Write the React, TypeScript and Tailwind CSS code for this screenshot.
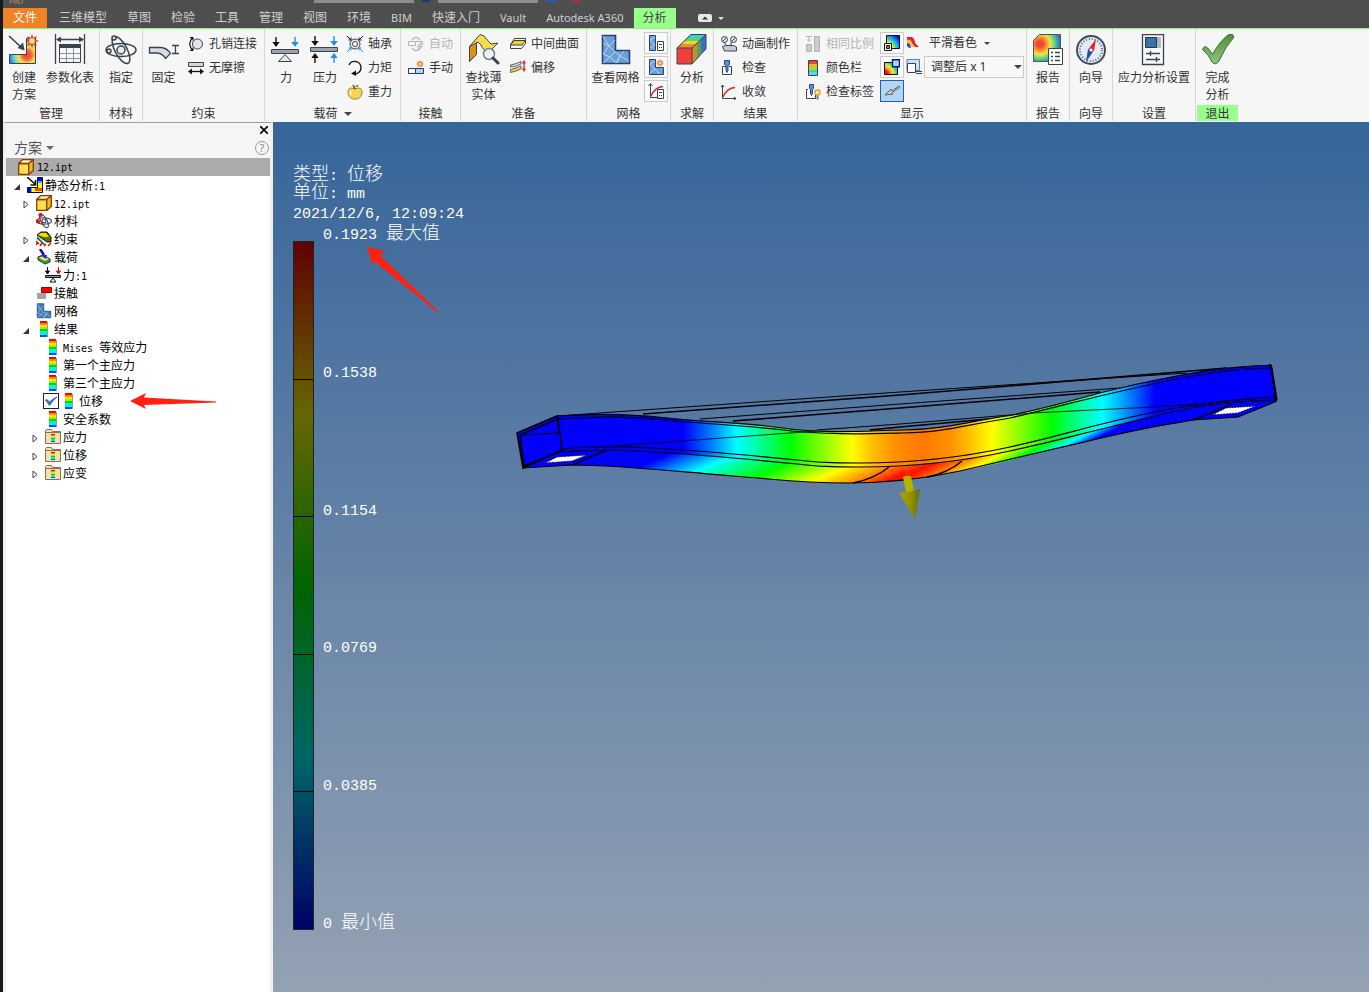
import type { ReactNode } from 'react'

const INK = '#3a4250'

type IconProps = { size?: number; children: ReactNode }

function Svg({ size = 16, children }: IconProps) {
  return (
    <svg width={size} height={size} viewBox={`0 0 ${size} ${size}`} fill="none" className="block shrink-0">
      {children}
    </svg>
  )
}

function Burst({ x, y, r = 6 }: { x: number; y: number; r?: number }) {
  const pts = Array.from({ length: 16 }, (_, i) => {
    const a = (i * Math.PI) / 8
    const d = i % 2 ? r * 0.5 : r
    return `${x + d * Math.cos(a)},${y + d * Math.sin(a)}`
  }).join(' ')
  return (
    <>
      <polygon points={pts} fill="#e0301c" />
      <circle cx={x} cy={y} r={r * 0.42} fill="#ffe9a0" stroke="#f6a623" />
    </>
  )
}

/* ---------- 大图标 32px ---------- */

const StudyIcon = () => (
  <Svg size={32}>
    <defs>
      <radialGradient id="study" gradientUnits="userSpaceOnUse" cx="19" cy="21" r="19">
        <stop offset="0" stopColor="#f0383c" />
        <stop offset=".25" stopColor="#f46a3c" />
        <stop offset=".45" stopColor="#fbe04a" />
        <stop offset=".7" stopColor="#5fd8d0" />
        <stop offset="1" stopColor="#2f62d8" />
      </radialGradient>
    </defs>
    <path d="M1.5 20.5h17v-16h9v25h-26z" fill="url(#study)" stroke={INK} />
    <path d="M1 2l13 12" stroke={INK} strokeWidth="1.6" />
    <path d="M16.5 16.5l-7-2.5 5.5-5.5z" fill={INK} />
    <Burst x={24} y={7} r={7} />
  </Svg>
)

const TableIcon = () => (
  <Svg size={32}>
    <path d="M1.5 0v30M30.5 0v30M3 5.5h26" stroke={INK} strokeWidth="1.3" />
    <path d="M2 5.5l5-3v6zM30 5.5l-5-3v6z" fill={INK} />
    <path d="M5.5 10.5h21v18h-21z" fill="#f4f6f8" stroke={INK} />
    <path d="M5 10h22v4H5z" fill={INK} />
    <path d="M6 19.5h20M6 24.5h20M12.5 14v14M19.5 14v14" stroke="#8d95a0" />
  </Svg>
)

const AtomIcon = ({ size = 32, dot = false }: { size?: number; dot?: boolean }) => (
  <svg width={size} height={size} viewBox="0 0 32 32" fill="none" className="block shrink-0">
    <g stroke={INK} strokeWidth={dot ? 2.2 : 1.5}>
      <ellipse cx="16" cy="16" rx="15" ry="6.5" />
      <ellipse cx="16" cy="16" rx="15" ry="6" transform="rotate(62 16 16)" />
      <circle cx="16" cy="16" r="4" fill="#e8ebef" />
      <circle cx="9" cy="4" r={dot ? 3 : 2} fill={dot ? '#f00' : '#dfe3e8'} stroke={dot ? '#f00' : INK} />
      <circle cx="4" cy="17" r={dot ? 3 : 2} fill={dot ? '#f00' : '#dfe3e8'} stroke={dot ? '#f00' : INK} />
    </g>
  </svg>
)

const FixedIcon = () => (
  <Svg size={32}>
    <path d="M1.5 13.5h12q6 1 9 6l-5 5q-3-5-8-5.5h-8z" fill="#d8dde3" stroke={INK} strokeWidth="1.3" />
    <path d="M24 11.5h7M24 19.5h7M27.5 11.5v8" stroke={INK} strokeWidth="1.3" />
  </Svg>
)

const DownArrow = ({ x, y, fill }: { x: number; y: number; fill: string }) => (
  <path d={`M${x - 0.7} ${y}h1.4v5h3l-3.7 5-3.7-5h3z`} fill={fill} />
)

const ForceIcon = () => (
  <Svg size={32}>
    <DownArrow x={6} y={3} fill="#111" />
    <DownArrow x={25} y={3} fill="#1f8fe8" />
    <path d="M1.5 15.5h27v4h-27z" fill="#99a1ad" stroke={INK} />
    <path d="M15 20.5l6.5 7h-13z" fill="#e3e6ea" stroke={INK} />
  </Svg>
)

const PressureIcon = () => (
  <Svg size={32}>
    <DownArrow x={6} y={2} fill="#111" />
    <DownArrow x={25} y={2} fill="#1f8fe8" />
    <path d="M1.5 13.5h27v4h-27z" fill="#99a1ad" stroke={INK} />
    <g transform="rotate(180 16 16)">
      <DownArrow x={26} y={3} fill="#111" />
      <DownArrow x={7} y={3} fill="#1f8fe8" />
    </g>
  </Svg>
)

const ThinIcon = () => (
  <Svg size={32}>
    <path d="M1.5 12.5l7-7v15l-7 7z" fill="#d9960a" stroke={INK} />
    <path d="M1.5 12.5L12 .5l4 1.500q4 5 7 8l7-1-9 9q-6-1-8-7l-3-3z" fill="#f7dd4c" stroke={INK} />
    <circle cx="21" cy="20" r="5.5" fill="#eef4f8" fillOpacity=".9" stroke="#77808c" strokeWidth="1.5" />
    <path d="M25 24l5 5" stroke={INK} strokeWidth="3" strokeLinecap="round" />
  </Svg>
)

const MeshIcon = ({ size = 32, fill = '#6b9edc' }: { size?: number; fill?: string }) => (
  <svg width={size} height={size} viewBox="0 0 32 32" fill="none" className="block shrink-0">
    <path d="M2.5 1.5h13v15h14v13h-27z" fill={fill} stroke="#24446f" strokeWidth="1.6" />
    <path d="M3 9l6 3 6-6M9 12l-6 8 7 3-7 6M9 12l6 6-5 5 6 6 4-7-5-4M20 22l9 5M20 22l4-5M20 22l-3 7M3 2l6 10" stroke="#b8d3f2" />
  </svg>
)

const SolveIcon = () => (
  <Svg size={32}>
    <path d="M1 14L15 0h15L16 14z" fill="#f3d23c" />
    <path d="M10 5l5-5h15l-5 5z" fill="#2fd4d8" />
    <path d="M8 7l3-3h15l-3 3z" fill="#5cd85c" />
    <path d="M1 14l4-4h15l-4 4z" fill="#f08b2c" />
    <path d="M16 14l5-5v16l-5 5z" fill="#c8902c" />
    <path d="M21 9l4-4v15l-4 5z" fill="#58a04c" />
    <path d="M25 5l5-5v15l-5 5z" fill="#3c6fc8" />
    <path d="M1 14h15v16H1z" fill="#f0403c" />
    <path d="M1 14L15 .5h15V15L16 30H1zM1 14h15v16M16 14L30 .5" stroke={INK} />
  </Svg>
)

const ReportIcon = () => (
  <Svg size={32}>
    <defs>
      <radialGradient id="report" gradientUnits="userSpaceOnUse" cx="8" cy="10" r="22">
        <stop offset=".14" stopColor="#f0453c" />
        <stop offset=".3" stopColor="#f5922f" />
        <stop offset=".48" stopColor="#f3e445" />
        <stop offset=".68" stopColor="#4fd48c" />
        <stop offset="1" stopColor="#2f50d8" />
      </radialGradient>
    </defs>
    <path d="M1.5 6.5l6-6h21v27h-27z" fill="url(#report)" stroke="#4b5a50" />
    <path d="M16.5 14.5h14v16h-14z" fill="#fff" stroke={INK} />
    <path d="M19 18.5h2M23 18.5h5M19 22.5h2M23 22.5h5M19 26.5h2M23 26.5h5" stroke={INK} strokeWidth="1.3" />
  </Svg>
)

const CompassIcon = () => (
  <Svg size={32}>
    <circle cx="16" cy="16" r="14" fill="#e3ebf3" stroke="#414b5a" strokeWidth="2" />
    <circle cx="16" cy="16" r="11" stroke="#5a6472" strokeWidth="2" strokeDasharray="1 1.9" />
    <path d="M21 5l-2 12-5.500-2z" fill="#e8202c" />
    <path d="M11 28l2-13 5.500 2z" fill="#1f4fae" />
    <circle cx="16" cy="16" r="1.5" fill="#fff" />
  </Svg>
)

const SettingsIcon = () => (
  <Svg size={32}>
    <path d="M4.5.5h21v30h-21z" fill="#f7f8f9" stroke={INK} strokeWidth="1.3" />
    <path d="M7.5 3.5h11v10h-11z" fill="#3f70a4" stroke="#1f3656" />
    <path d="M19 3h4v11h-4z" fill="#b4b8bf" />
    <path d="M8 19.5h14M8 25.5h14M12.5 17v5M18.5 23v5" stroke={INK} strokeWidth="1.3" />
  </Svg>
)

const CheckIcon = () => (
  <Svg size={32}>
    <defs>
      <linearGradient id="tick" x1="0" y1="0" x2="0" y2="1">
        <stop offset="0" stopColor="#4f8c3c" />
        <stop offset="1" stopColor="#8cc878" />
      </linearGradient>
    </defs>
    <path d="M.7 15q2-4 5-1l5 6Q18 7 26 1q5-2 6 2-9 10-15 24-4 5-7 1-3-7-9-12z" fill="url(#tick)" stroke="#3a6b2c" />
  </Svg>
)

/* ---------- 小图标 16px ---------- */

const PinIcon = () => (
  <Svg>
    <circle cx="9.500" cy="8" r="5" fill="#e1e6ec" stroke={INK} />
    <path d="M4.5 1.5Q-1 8 4.5 14.5M5 1.5H2M5 1.5v3M5 14.5H2M5 14.5v-3" stroke="#111" strokeWidth="1.2" />
  </Svg>
)
const FrictionIcon = () => (
  <Svg>
    <path d="M.5 2.5h15v4H.5z" fill="#d3d8de" stroke={INK} />
    <path d="M2 11.5h12" stroke="#111" strokeWidth="1.3" />
    <path d="M0 11.5l4-3v6zM16 11.5l-4-3v6z" fill="#111" />
  </Svg>
)
const BearingIcon = () => (
  <Svg>
    <circle cx="8" cy="8" r="5" fill="#e6e9ed" stroke={INK} />
    <circle cx="8" cy="8" r="2.5" fill="#fff" stroke={INK} />
    <path d="M0 0l4 4M16 0l-4 4M1.5 4h2.500v-2.500M14.5 4H12V1.5" stroke="#111" />
    <path d="M0 16l4-4M16 16l-4-4M1.5 12h2.500v2.500M14.5 12H12v2.500" stroke="#1f8fe8" />
  </Svg>
)
const MomentIcon = () => (
  <Svg>
    <path d="M2 5a6.300 6.300 0 1 1 6 9" stroke="#111" strokeWidth="1.4" />
    <path d="M4 13.5l5-3v5.500z" fill="#111" />
  </Svg>
)
const AppleIcon = () => (
  <Svg>
    <path d="M8 5q7-3 7 3 0 5-4.500 7h-5Q1 13 1 8q0-6 7-3z" fill="#f3d554" stroke="#a8842a" />
    <path d="M4 7q-1.500 2 0 4" stroke="#fff6c4" strokeWidth="1.5" />
    <path d="M8 5L6 1" stroke="#5a4a20" strokeWidth="1.5" />
    <path d="M8 3q1-3 4-2-1 3-4 2z" fill="#8a9a3a" />
  </Svg>
)
const AutoIcon = () => (
  <Svg>
    <path d="M4 4Q8-1 12 4M4 12q4 5 8 0" stroke="#bbb" strokeWidth="1.5" />
    <path d="M.5 5.5h7v4h-7zM7.5 5.5h7v3" stroke="#b4b4b4" />
    <path d="M12 7l-3 4h3l-2 4 5-5h-3l2-3z" fill="#d4d4d4" stroke="#b4b4b4" strokeWidth=".7" />
  </Svg>
)
const ManualIcon = () => (
  <Svg>
    <path d="M.5 8.5h7v5h-7z" fill="#fff" stroke="#1c3f78" />
    <path d="M7.5 8.5h8v5h-8z" fill="#b5d0f0" stroke="#1c3f78" />
    <Burst x={12} y={4} r={4} />
  </Svg>
)
const MidIcon = () => (
  <Svg>
    <path d="M.5 8.5l4-6h11v5l-4 5H.5z" fill="#f5f5ee" stroke={INK} />
    <path d="M.5 9l3.500-4.500h11.500L12 9z" fill="#f6cf2c" stroke={INK} />
  </Svg>
)
const OffsetIcon = () => (
  <Svg>
    <path d="M.5 5Q6 4 11 1.5v2.500Q6 7 .5 7z" fill="#d3dae2" stroke={INK} strokeWidth=".8" />
    <path d="M.5 9.5q5.500-1 10.500-3.500v3Q6 11.5.5 12.5z" fill="#f6cf2c" stroke={INK} strokeWidth=".8" />
    <path d="M14 2v8" stroke="#e02020" strokeWidth="1.2" />
    <path d="M14 0l2 3.500h-4zM14 12l2-3.500h-4z" fill="#e02020" />
  </Svg>
)
const Calc = () => (
  <>
    <path d="M9.5 6.5h6v9h-6z" fill="#fff" stroke={INK} />
    <path d="M11 9.5h3M11 12.5h1M13 12.5h1" stroke={INK} />
  </>
)
const MeshCalcIcon = () => (
  <Svg>
    <path d="M1.5.5h6v15h-6z" fill="#6b9edc" stroke="#24446f" />
    <path d="M2 5l5-3M2 5l5 5M2 13l5-3" stroke="#b8d3f2" />
    <Calc />
  </Svg>
)
const MeshNewIcon = () => (
  <Svg>
    <path d="M1.5.5h6v8h8v7h-14z" fill="#6b9edc" stroke="#24446f" />
    <path d="M2 5l5-3M2 5l5 5-5 4M7 10l5 5" stroke="#b8d3f2" />
    <Burst x={12} y={4} r={4} />
  </Svg>
)
const CurveCalcIcon = () => (
  <Svg>
    <path d="M2.5 1v13.500H16M.5 3l2-2.500 2 2.500" stroke={INK} />
    <path d="M3 13Q7 4 15 3.5" stroke="#e02020" strokeWidth="1.3" />
    <Calc />
  </Svg>
)
const MovieIcon = () => (
  <Svg>
    <circle cx="3.500" cy="3.500" r="3" fill="#e1e5ea" stroke={INK} />
    <circle cx="12.500" cy="3.500" r="3" fill="#e1e5ea" stroke={INK} />
    <path d="M2 5l3-3M11 5l3-3M3 6l3 4M10 6v4" stroke={INK} />
    <path d="M1.5 10.5l3-1h8l3 1.500v4h-12z" fill="#c3c9d1" stroke={INK} />
  </Svg>
)
const ProbeIcon = () => (
  <Svg>
    <path d="M5 6.5H1.5v8h9v-8H8" fill="#fff" stroke={INK} />
    <path d="M3.5.5h5v4l-1.500 1v5l-1 2-1-2v-5l-1.500-1z" fill="#5b94d8" stroke="#1d4a88" />
  </Svg>
)
const ConvergeIcon = () => (
  <Svg>
    <path d="M1.5 1v13.500H15M0 3l1.500-2L3 3M13 13l2 1.500-2 1.500" stroke={INK} />
    <path d="M2 13Q6 4 14 3.5" stroke="#e02020" strokeWidth="1.4" />
  </Svg>
)
const ScaleIcon = () => (
  <Svg>
    <path d="M1 .5h6M4 1v4M2 3.5l2 2 2-2" stroke="#b0b0b0" />
    <path d="M1.500 8.500h5v7h-5zM9.500.500h5v15h-5z" fill="#ccc" stroke="#b0b0b0" />
  </Svg>
)
const ColorBarIcon = () => (
  <Svg>
    <path d="M4 1h8v3H4z" fill="#e84a30" />
    <path d="M4 4h8v3H4z" fill="#f0b030" />
    <path d="M4 7h8v3H4z" fill="#a8d840" />
    <path d="M4 10h8v2H4z" fill="#40d0a0" />
    <path d="M4 12h8v3H4z" fill="#60d8f0" />
    <path d="M3.5.5h9v15h-9z" stroke={INK} />
  </Svg>
)
const ProbeTagIcon = () => (
  <Svg>
    <path d="M3 5.5H1.5v9h9v-5" fill="#fff" stroke={INK} />
    <path d="M4.5.5h4v4l-1 1v4l-1 2-1-2v-4l-1-1z" fill="#5b94d8" stroke="#1d4a88" />
    <circle cx="12.500" cy="8.500" r="2.600" fill="#ffe79a" stroke="#e8982a" strokeWidth="1.300" />
    <path d="M11.5 11.500h2v4h-2z" fill="#777" />
  </Svg>
)
const ExtremeIcon = ({ high }: { high?: boolean }) => (
  <Svg>
    <defs>
      <radialGradient id={high ? 'exHigh' : 'exLow'} gradientUnits="userSpaceOnUse" cx={1} cy={15} r={19}>
        <stop offset=".15" stopColor="#f01818" />
        <stop offset=".35" stopColor="#fb3" />
        <stop offset=".45" stopColor="#f6f020" />
        <stop offset=".6" stopColor="#20d8c0" />
        <stop offset=".75" stopColor="#28f" />
        <stop offset="1" stopColor="#00c" />
      </radialGradient>
    </defs>
    <path d={high ? 'M.5 3.5h13v12H.5z' : 'M2.5.5h13v13h-13z'} fill={high ? 'url(#exHigh)' : 'url(#exLow)'} stroke="#111" />
    {high ? (
      <path d="M8.500.700h7v7h-7z" fill="#b8d0ff" stroke="#001a80" strokeWidth="1.4" />
    ) : (
      <>
        <path d="M.5 8.5h7v7h-7z" fill="#fff" stroke="#111" />
        <path d="M2.5 10.5h3v3h-3z" fill="#f55" stroke="#111" />
      </>
    )}
  </Svg>
)
const LoadArrowIcon = () => (
  <Svg>
    <path d="M15 3l-7 5-1-2-6 6 8-1-1-1.500 7.500-5z" fill="#c5c9ce" stroke="#5a6370" />
  </Svg>
)
const SmoothIcon = () => (
  <Svg>
    <path d="M1 2h5q3 2 3 6l4 4h-4Q6 9 5 6 4 4 1 5z" fill="#f02020" />
    <path d="M1 5q3-1 4 2 1 4 4 5H6Q3 9 1 8z" fill="#fb2" />
    <path d="M1 8q3 0 4 5-3 0-4-2z" fill="#24c" />
  </Svg>
)
const AdjustIcon = () => (
  <Svg>
    <path d="M1 .5h12.500v11H1z" fill="#cfe2f2" stroke="#4a86b4" />
    <path d="M1.5 4.500h8v9h-8z" fill="#fff" stroke={INK} />
    <path d="M10 12h6v4h-6z" fill="#f6f6f6" />
    <path d="M10 12.5h6M10 14.5h6" stroke={INK} />
  </Svg>
)

/* ---------- 浏览器树图标 ---------- */

const CubeIcon = () => (
  <Svg>
    <path d="M.7 4.5h10v11H.7z" fill="#ffdf50" stroke="#8a3c00" strokeWidth="1.3" />
    <path d="M.7 4.5l4-4h10.600l-4.600 4z" fill="#fff3b8" stroke="#8a3c00" strokeWidth="1.3" />
    <path d="M10.700 4.500l4.600-4v11l-4.600 4z" fill="#f0b820" stroke="#8a3c00" strokeWidth="1.3" />
  </Svg>
)
const TreeStudyIcon = () => (
  <Svg>
    <path d="M.5 10.5h10v-10h5v15H.5z" fill="#00d8f0" stroke="#111" />
    <path d="M1 11h3v4H1zM11 1h4v3h-4z" fill="#00f" />
    <path d="M5 11h10v4H5zM11 6h4v5h-4z" fill="#ff0" />
    <path d="M8 11h7v3H8z" fill="#f40" />
    <path d="M0 0l8 7M8.5 3v5h-5" stroke="#111" strokeWidth="1.6" />
  </Svg>
)
const TreeConstraintIcon = () => (
  <Svg>
    <path d="M1 4l4-3h6l4 5v5h-4z" fill="#6a6a10" stroke="#111" />
    <path d="M2 4l3-2h5l3 4H8z" fill="#f0e000" />
    <path d="M1 5l8 8v2L1 8z" fill="#084" />
    <path d="M0 10l3 3M4 15l2-3M8 15l2-2M12 15l3-3M0 14l2-3" stroke="#d00" strokeWidth="1.4" />
  </Svg>
)
const TreeLoadIcon = () => (
  <Svg>
    <path d="M2 8l5-2 7 4v3l-5 2-7-4z" fill="#2a9a50" stroke="#333" />
    <path d="M3 9l4-2 6 3-4 2z" fill="#f4f020" />
    <path d="M4 0l4 6" stroke="#10c" strokeWidth="2.5" />
    <path d="M4 6h7l-1 4z" fill="#22f" />
  </Svg>
)
const TreeForceIcon = () => (
  <Svg>
    <path d="M2.5 0v6M.5 4l2 3 2-3z" stroke="#111" fill="#111" />
    <path d="M13.5 0v6M11.5 4l2 3 2-3z" stroke="#f00" fill="#f00" />
    <path d="M.5 8.5h15v2H.5z" fill="#7a9ab0" stroke="#111" />
    <path d="M8 11l3 4H5z" fill="#fff" stroke="#111" />
  </Svg>
)
const ContactIcon = () => (
  <Svg>
    <path d="M1 8h9v6H1z" fill="#a4a4a4" />
    <path d="M5.5 2.5h10v5h-10z" fill="#f00" stroke="#900" />
  </Svg>
)
const Stripes = ({ x = 4, y = 0, w = 7, h = 2 }) => (
  <>
    {['#ff0000', '#ff9000', '#ffe800', '#a0f000', '#00d800', '#00ffb0', '#00f0ff', '#0050ff'].map((c, i) => (
      <rect key={c} x={x} y={y + i * h} width={w} height={h} fill={c} />
    ))}
  </>
)
const ResultIcon = () => (
  <Svg>
    <path d="M11 1h1v15h-1z" fill="#999" />
    <Stripes />
  </Svg>
)
const FolderIcon = () => (
  <Svg>
    <path d="M.5 1.5l1-1h5l1 2h8v12H.5z" fill="#f6dfae" stroke="#8c6f4c" />
    <path d="M1 3.5h14" stroke="#8c6f4c" />
    <Stripes x={6} y={5} w={4} h={1} />
  </Svg>
)

/* ---------- 功能区 ---------- */

// 西文单独设字体字号，中文保持全角
function Mixed({ text, latin }: { text: string; latin: string }) {
  return (
    <span className="whitespace-pre">
      {text.split(/([\x20-\x7e]+)/).map((part, i) =>
        i % 2 ? (
          <span key={i} className={latin}>
            {part}
          </span>
        ) : (
          part
        )
      )}
    </span>
  )
}

function Panel({ title, children, more, exit }: { title: string; children: ReactNode; more?: boolean; exit?: boolean }) {
  return (
    <section className="flex flex-col border-r border-[#d6d6d6] last:border-r-0">
      <div className="flex h-[76px]">{children}</div>
      <h2 className={`mx-px flex h-4 items-center justify-center gap-1.5 pt-0.5 ${exit ? 'bg-[#98ff8c]' : ''}`}>
        {title}
        {more && <i className="border-x-4 border-t-4 border-x-transparent border-t-[#444]" />}
      </h2>
    </section>
  )
}

function Big({ icon, lines, width = 'w-full' }: { icon: ReactNode; lines: string[]; width?: string }) {
  return (
    <button className={`flex flex-col items-center pt-[5px] ${width}`}>
      {icon}
      <span className="mt-[3px] flex flex-col leading-[17px] whitespace-nowrap">
        {lines.map((l) => (
          <span key={l}>{l}</span>
        ))}
      </span>
    </button>
  )
}

function SmallList({ items, first }: { items: [ReactNode, string, boolean?][]; first?: boolean }) {
  return (
    <div className={`flex flex-col pt-[3px] ${first ? 'pl-[7px]' : 'pl-1'}`}>
      {items.map(([icon, label, off]) => (
        <button
          key={label}
          disabled={off}
          className="flex h-6 items-center gap-[5px] whitespace-nowrap disabled:text-[#b4b4b4]"
        >
          {icon}
          {label}
        </button>
      ))}
    </div>
  )
}

function IconButtons({ items }: { items: [ReactNode, string, boolean?][] }) {
  return (
    <div className="flex flex-col gap-0.5 pt-[3px]">
      {items.map(([icon, label, on]) => (
        <button
          key={label}
          aria-label={label}
          className={`flex h-[22px] w-6 items-center justify-center border ${
            on ? 'border-[#1c62b8] bg-[#b4d4f2]' : 'border-[#cacaca] bg-[#fafafa]'
          }`}
        >
          {icon}
        </button>
      ))}
    </div>
  )
}

function Ribbon() {
  return (
    <div className="grid grid-cols-[97px_43px_122px_136px_60px_126px_84px_43px_84px_229px_43px_43px_83px_43px] border-t border-[#8cf57c] bg-[#f6f6f6] pb-px text-xs text-[#333]">
      <Panel title="管理">
        <Big icon={<StudyIcon />} lines={['创建', '方案']} width="w-[42px]" />
        <Big icon={<TableIcon />} lines={['参数化表']} width="w-[50px]" />
      </Panel>
      <Panel title="材料">
        <Big icon={<AtomIcon />} lines={['指定']} />
      </Panel>
      <Panel title="约束">
        <Big icon={<FixedIcon />} lines={['固定']} width="w-[41px]" />
        <SmallList items={[[<PinIcon />, '孔销连接'], [<FrictionIcon />, '无摩擦']]} />
      </Panel>
      <Panel title="载荷" more>
        <Big icon={<ForceIcon />} lines={['力']} width="w-[42px]" />
        <Big icon={<PressureIcon />} lines={['压力']} width="w-[36px]" />
        <SmallList items={[[<BearingIcon />, '轴承'], [<MomentIcon />, '力矩'], [<AppleIcon />, '重力']]} />
      </Panel>
      <Panel title="接触">
        <SmallList first items={[[<AutoIcon />, '自动', true], [<ManualIcon />, '手动']]} />
      </Panel>
      <Panel title="准备">
        <Big icon={<ThinIcon />} lines={['查找薄', '实体']} width="w-[45px]" />
        <SmallList items={[[<MidIcon />, '中间曲面'], [<OffsetIcon />, '偏移']]} />
      </Panel>
      <Panel title="网格">
        <Big icon={<MeshIcon />} lines={['查看网格']} width="w-[57px]" />
        <IconButtons
          items={[
            [<MeshCalcIcon />, '网格设置'],
            [<MeshNewIcon />, '局部网格控制'],
            [<CurveCalcIcon />, '收敛设置'],
          ]}
        />
      </Panel>
      <Panel title="求解">
        <Big icon={<SolveIcon />} lines={['分析']} />
      </Panel>
      <Panel title="结果">
        <SmallList first items={[[<MovieIcon />, '动画制作'], [<ProbeIcon />, '检查'], [<ConvergeIcon />, '收敛']]} />
      </Panel>
      <Panel title="显示">
        <SmallList
          first
          items={[[<ScaleIcon />, '相同比例', true], [<ColorBarIcon />, '颜色栏'], [<ProbeTagIcon />, '检查标签']]}
        />
        <div className="pl-1.5">
          <IconButtons
            items={[
              [<ExtremeIcon />, '最大值'],
              [<ExtremeIcon high />, '最小值'],
              [<LoadArrowIcon />, '边界条件', true],
            ]}
          />
        </div>
        <div className="flex flex-col pt-0.5 pl-0.5">
          <button className="flex h-6 items-center gap-[7px]">
            <SmoothIcon />
            平滑着色
            <i className="border-x-[3px] border-t-[3px] border-x-transparent border-t-[#444]" />
          </button>
          <div className="flex h-6 items-center gap-0.5">
            <AdjustIcon />
            <div className="relative">
              <select
                aria-label="变形比例"
                className="h-[22px] w-[100px] appearance-none border border-[#cacaca] bg-[#f8f8f8] pl-1.5"
              >
                <option>调整后 x 1</option>
              </select>
              <i className="pointer-events-none absolute top-[9px] right-[2px] border-x-4 border-t-4 border-x-transparent border-t-[#444]" />
            </div>
          </div>
        </div>
      </Panel>
      <Panel title="报告">
        <Big icon={<ReportIcon />} lines={['报告']} />
      </Panel>
      <Panel title="向导">
        <Big icon={<CompassIcon />} lines={['向导']} />
      </Panel>
      <Panel title="设置">
        <Big icon={<SettingsIcon />} lines={['应力分析设置']} />
      </Panel>
      <Panel title="退出" exit>
        <Big icon={<CheckIcon />} lines={['完成', '分析']} />
      </Panel>
    </div>
  )
}

const tabs = ['三维模型', '草图', '检验', '工具', '管理', '视图', '环境', 'BIM', '快速入门', 'Vault', 'Autodesk A360']

function Header() {
  return (
    <header>
      <div className="flex h-2 items-start overflow-hidden bg-[#4e4e4e] text-[7px] leading-[4px] text-[#c89058]">
        <span className="w-[311px] pl-1.5">PRO</span>
        <span className="h-[3px] w-[100px] bg-[#8e8e8e]" />
        <span className="ml-2 h-0.5 w-2 bg-[#1c3a6c]" />
        <span className="ml-2 h-[3px] w-[100px] bg-[#8e8e8e]" />
        <span className="ml-2 h-0.5 w-2.5 bg-[#2060b0]" />
        <span className="ml-4 h-0.5 w-2 bg-[#b03030]" />
      </div>
      <nav className="flex h-5 items-stretch bg-[#4e4e4e] text-xs text-[#cfcfcf]">
        <button className="mr-0.5 w-11 bg-[#f08226] text-white">文件</button>
        {tabs.map((t) => (
          <button key={t} className="px-2.5 whitespace-nowrap">
            <Mixed text={t} latin="text-[11px]" />
          </button>
        ))}
        <button className="bg-[#98ff8c] px-[9px] text-[#444]">分析</button>
        <button aria-label="最小化功能区" className="ml-[22px] flex items-center gap-1.5">
          <svg width="14" height="8" viewBox="0 0 14 8">
            <rect width="14" height="8" rx="2" fill="#e8e8e8" />
            <path d="M4 5.500l3-3 3 3z" fill="#333" />
          </svg>
          <i className="border-x-[3px] border-t-[3px] border-x-transparent border-t-[#e0e0e0]" />
        </button>
      </nav>
      <Ribbon />
    </header>
  )
}

/* ---------- 浏览器 ---------- */

type Node = { label: string; icon: ReactNode; pad: string; state?: 'open' | 'closed' }

const nodes: Node[] = [
  { label: '静态分析:1', icon: <TreeStudyIcon />, pad: 'pl-2', state: 'open' },
  { label: '12.ipt', icon: <CubeIcon />, pad: 'pl-[17px]', state: 'closed' },
  { label: '材料', icon: <AtomIcon size={16} dot />, pad: 'pl-[17px]' },
  { label: '约束', icon: <TreeConstraintIcon />, pad: 'pl-[17px]', state: 'closed' },
  { label: '载荷', icon: <TreeLoadIcon />, pad: 'pl-[17px]', state: 'open' },
  { label: '力:1', icon: <TreeForceIcon />, pad: 'pl-[26px]' },
  { label: '接触', icon: <ContactIcon />, pad: 'pl-[17px]' },
  { label: '网格', icon: <MeshIcon size={16} fill="#3f7fb4" />, pad: 'pl-[17px]' },
  { label: '结果', icon: <ResultIcon />, pad: 'pl-[17px]', state: 'open' },
  { label: 'Mises 等效应力', icon: <ResultIcon />, pad: 'pl-[26px]' },
  { label: '第一个主应力', icon: <ResultIcon />, pad: 'pl-[26px]' },
  { label: '第三个主应力', icon: <ResultIcon />, pad: 'pl-[26px]' },
]

const tail: Node[] = [
  { label: '安全系数', icon: <ResultIcon />, pad: 'pl-[26px]' },
  { label: '应力', icon: <FolderIcon />, pad: 'pl-[26px]', state: 'closed' },
  { label: '位移', icon: <FolderIcon />, pad: 'pl-[26px]', state: 'closed' },
  { label: '应变', icon: <FolderIcon />, pad: 'pl-[26px]', state: 'closed' },
]

const TREE_LATIN = "font-['DejaVu_Sans_Mono'] text-[10px]"

function Row({ label, icon, pad, state }: Node) {
  return (
    <li className={`flex h-[18px] items-center ${pad}`}>
      <svg width="13" height="16" viewBox="0 0 13 16" className="shrink-0">
        {state === 'open' && <path d="M6 7v6H0z" fill="#333" />}
        {state === 'closed' && <path d="M1 6v7l4-3.500z" fill="#fff" stroke="#444" />}
      </svg>
      {icon}
      <span className="ml-0.5 pt-0.5">
        <Mixed text={label} latin={TREE_LATIN} />
      </span>
    </li>
  )
}

function Browser() {
  return (
    <aside className="w-[270px] shrink-0 border-x-[3px] border-t border-x-[#f0f0f0] border-t-[#a0a0a0] bg-white text-xs text-black">
      <div className="h-[35px] bg-[#f5f5f5]">
        <div className="flex h-3.5 justify-end">
          <button aria-label="关闭" className="w-2.5">
            <svg width="8" height="8" viewBox="0 0 8 8">
              <path d="M0 0l8 8M8 0L0 8" stroke="#000" strokeWidth="1.6" />
            </svg>
          </button>
        </div>
        <div className="flex h-[22px] items-center justify-between pl-2 text-sm text-[#555]">
          <button className="flex items-center gap-1">
            方案
            <i className="border-x-4 border-t-4 border-x-transparent border-t-[#666]" />
          </button>
          <button aria-label="帮助" className="mr-px h-3.5 w-3.5 rounded-full border border-[#999] text-[11px] leading-3 text-[#888]">
            ?
          </button>
        </div>
      </div>
      <ul>
        <li className="flex h-[18px] items-center gap-[3px] bg-[#ababab] pl-3">
          <CubeIcon />
          <Mixed text="12.ipt" latin={TREE_LATIN} />
        </li>
        {nodes.map((n) => (
          <Row key={n.label} {...n} />
        ))}
        <li className="flex h-[18px] items-center pl-[37px]">
          <span className="relative">
            <input id="disp" type="checkbox" defaultChecked className="block h-4 w-4 appearance-none border border-[#222] bg-white" />
            <svg width="16" height="16" viewBox="0 0 16 16" className="pointer-events-none absolute inset-0">
              <path d="M2.500 7l4 5.500Q9 8 14 4 9 6 6.500 9L4 6.500z" fill="#3a70b0" stroke="#3a70b0" />
            </svg>
          </span>
          <label htmlFor="disp" className="ml-0.5 flex items-center gap-0.5">
            <ResultIcon />
            <span className="pt-0.5">位移</span>
          </label>
          <svg width="88" height="18" viewBox="0 0 88 18" className="ml-[26px]">
            <path d="M1 9L17 1l-2 4.500L87 9.500v1L15 13l2 4z" fill="#ff2010" />
          </svg>
        </li>
        {tail.map((n) => (
          <Row key={n.label} {...n} />
        ))}
      </ul>
    </aside>
  )
}

/* ---------- 视图区 ---------- */

const FRONT_STOPS: [number, string][] = [
  [557, '#0000ff'],
  [683, '#0000ff'],
  [712, '#0080ff'],
  [737, '#00ffff'],
  [765, '#00ff80'],
  [790, '#00ff00'],
  [852, '#ffff00'],
  [872, '#ffc000'],
  [895, '#ff9000'],
  [922, '#ff7800'],
  [950, '#ff9000'],
  [970, '#ffc000'],
  [992, '#ffff00'],
  [1052, '#00ff00'],
  [1078, '#00ff90'],
  [1103, '#00ffff'],
  [1130, '#0080ff'],
  [1155, '#0000ff'],
  [1277, '#0000ff'],
]

const TOP = 'M557 416C600 413 630 414 667 418S740 422 783 428 860 431 903 430 960 423 1010 415.500C1050 407 1070 401 1100 393S1160 379 1193 373 1240 367 1271 365'
const BACK = 'L1276 400C1250 401 1220 404 1210 405 1180 409 1160 414 1110 427S1050 442 1010 451 940 466 860 467 780 462 733 458 640 448 600 450L562 452z'

function Beam() {
  return (
    <svg viewBox="273 122 1096 870" className="pointer-events-none absolute inset-0 h-full w-full" fill="none">
      <defs>
        <linearGradient id="front" gradientUnits="userSpaceOnUse" x1="557" y1="0" x2="1277" y2="0">
          {FRONT_STOPS.map(([x, c]) => (
            <stop key={x} offset={(x - 557) / 720} stopColor={c} />
          ))}
        </linearGradient>
        <linearGradient id="underL" gradientUnits="userSpaceOnUse" x1="655" y1="460" x2="699" y2="562">
          <stop offset="0" stopColor="#0000ff" />
          <stop offset=".24" stopColor="#00ffff" />
          <stop offset=".5" stopColor="#00ff00" />
          <stop offset=".74" stopColor="#ffff00" />
          <stop offset=".89" stopColor="#ff8c00" />
          <stop offset="1" stopColor="#ff1000" />
        </linearGradient>
        <linearGradient id="underR" gradientUnits="userSpaceOnUse" x1="905" y1="467" x2="933" y2="522">
          <stop offset="0" stopColor="#ff5400" />
          <stop offset=".15" stopColor="#ff1000" />
          <stop offset=".37" stopColor="#ff8c00" />
          <stop offset=".52" stopColor="#ffff00" />
          <stop offset=".7" stopColor="#00ff00" />
          <stop offset=".86" stopColor="#00ffff" />
          <stop offset="1" stopColor="#0000ff" />
        </linearGradient>
        <linearGradient id="arrow" x1="0" y1="0" x2="1" y2="0">
          <stop offset="0" stopColor="#a8a800" />
          <stop offset=".5" stopColor="#969600" />
          <stop offset="1" stopColor="#6c6c00" />
        </linearGradient>
      </defs>

      {/* 未变形轮廓 */}
      <g stroke="#000">
        <path d="M557 416L900 392l287-19M700 419l200-15 220-16M817 430l83-6 110-9" />
        <path d="M643 414l257-19 327-27M733 421l167-13 200-16M870 430l30-3 100-9" strokeWidth="1.6" />
      </g>

      {/* 底面 */}
      <path d="M523 468L562 451C600 447 650 448 733 456s100 10 173 10v14q-25 3-59 3C800 483 770 479 733 476S620 465 572 465z" fill="url(#underL)" />
      <path d="M905 466C960 463 990 455 1010 450l100-25q90-24 167-27v3l-39 16-45 3c-40 6-80 15-133 28S980 469 905 480z" fill="url(#underR)" />
      <path d={TOP + BACK} fill="url(#front)" />
      <path d="M517 433L557 416l5 36-39 16z" fill="#0000ff" />

      {/* 棱线 */}
      <g stroke="#000" strokeWidth="1.2">
        <path d={TOP + 'L1276 400'} />
        <path d="M558 419C600 416 630 416 667 420S740 425 783 430 860 434 903 433 960 426 1010 418C1050 409 1070 403 1100 396S1160 382 1193 376 1240 369 1270 368" />
        <path d="M563 449C600 445 640 446 733 454S810 463 860 463 960 458 1010 447 1060 434 1110 422 1180 407 1210 403 1250 399 1275 397" />
        <path d="M562 452C600 448 640 450 733 458S810 467 860 467 960 462 1010 451 1060 439 1110 427 1180 409 1210 405 1250 401 1276 400" />
        <path d="M523 468l49-3c48 0 110 7 161 11s67 7 114 7 90-7 113-12 97-23 150-35 50-10 83-16l45-3 39-16" />
        <path d="M889 467q-15 12-36 16M962 461q-14 12-35 16M572 465l35-15M1193 420l37-15" strokeWidth="1.4" />
        <path d="M600 447l217-16M1010 415l23-2 120-6 60-4" strokeWidth=".8" />
        <path d="M520 435l38-2" />
      </g>
      <path d="M517 433L557 416l5 34-39 18zM520 435l38-16 4 31M520 435l4 31 38-15" stroke="#000" strokeWidth="1.6" />
      <path d="M1269 365q2 0 2.500 3l5 32" stroke="#000" strokeWidth="2.2" />
      <path d="M545 463l12-6 30-2-15 6zM1212 415l14-7 30-2-18 7z" fill="#fff" stroke="#000" strokeWidth=".8" strokeDasharray="2 1" />

      {/* 载荷箭头 */}
      <path d="M903 477q4-2 8-1l3 15-8 2z" fill="#b4b400" />
      <path d="M899 493q10-1 21-4l-5 30z" fill="url(#arrow)" />

      <path d="M367 247l18 4-5 4.500L439 312v1.500L380 266l-5-5-3 3z" fill="#ff2010" />
    </svg>
  )
}

const VIEW_LATIN = "font-['Liberation_Mono'] text-[15px]"
const legend = ['0.1538', '0.1154', '0.0769', '0.0385', '0 最小值']

function Viewport() {
  return (
    <main className="relative flex flex-1 flex-col bg-linear-to-b from-[#36659a] to-[#94a1b3] px-5 pt-[42px] pb-[62px] text-lg font-light text-white">
      <Beam />
      <p className="h-[18px] leading-[18px]">
        <Mixed text="类型: 位移" latin={VIEW_LATIN} />
      </p>
      <p className="h-[18px] leading-[18px]">
        <Mixed text="单位: mm" latin={VIEW_LATIN} />
      </p>
      <p className="h-[22px] leading-[22px]">
        <Mixed text="2021/12/6, 12:09:24" latin={VIEW_LATIN} />
      </p>
      <div className="mt-[19px] flex flex-1 gap-[9px]">
        <div className="flex w-[21px] flex-col border border-[#222] bg-[linear-gradient(#600000,#666600_25%,#006400_50%,#006666_75%,#000066)]">
          {legend.map((l) => (
            <div key={l} className="flex-1 border-b border-black last:border-b-0" />
          ))}
        </div>
        <div className="-mt-3 -mb-0.5 flex flex-col">
          <div className="flex h-3.5 items-end leading-[14px]">
            <Mixed text="0.1923 最大值" latin={VIEW_LATIN} />
          </div>
          {legend.map((l) => (
            <div key={l} className="flex flex-1 items-end leading-[14px]">
              <Mixed text={l} latin={VIEW_LATIN} />
            </div>
          ))}
        </div>
      </div>
    </main>
  )
}

export default function App() {
  return (
    <div className="flex min-h-screen bg-[#14191c] pl-[3px] font-['Noto_Sans','Noto_Sans_CJK_SC',sans-serif]">
      <div className="flex min-w-0 flex-1 flex-col">
        <Header />
        <div className="flex flex-1">
          <Browser />
          <Viewport />
        </div>
      </div>
    </div>
  )
}
